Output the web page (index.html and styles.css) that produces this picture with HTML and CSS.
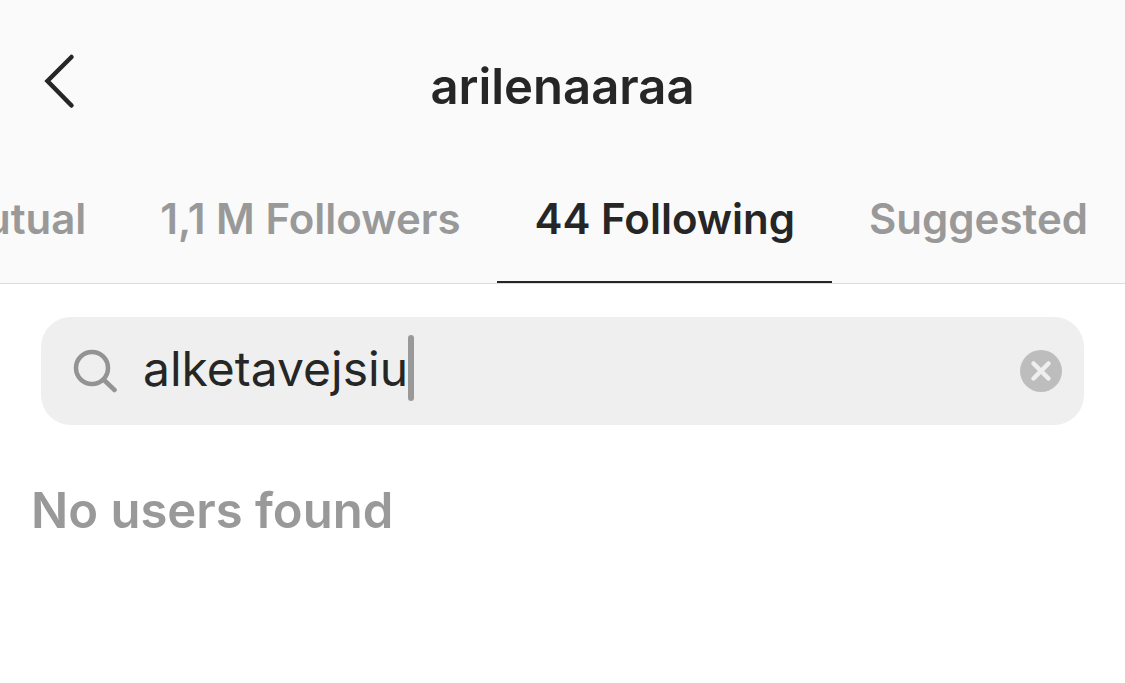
FILE: index.html
```html
<!DOCTYPE html>
<html lang="en">
<head>
    <meta charset="UTF-8">
    <meta name="viewport" content="width=device-width, initial-scale=1">
    <title>arilenaaraa</title>
    <link rel="stylesheet" href="styles.css">
</head>
<body>
    <header class="header">
        <div class="title-bar">
            <button class="back" type="button" aria-label="Back">
                <svg width="36" height="60" viewBox="0 0 36 60" fill="none" stroke="#262626" stroke-width="4.5" stroke-linecap="round">
                    <path d="M31.5 6 7.5 30 31.5 54.5"/>
                </svg>
            </button>
            <h1>arilenaaraa</h1>
        </div>
        <nav class="tabs">
            <a class="tab" href="#mutual">Mutual</a>
            <a class="tab" href="#followers">1,1 M Followers</a>
            <a class="tab active" href="#following" aria-current="page">44 Following</a>
            <a class="tab" href="#suggested">Suggested</a>
        </nav>
    </header>

    <main>
        <form class="search" role="search">
            <svg class="search-icon" width="44" height="44" viewBox="0 0 44 44" fill="none" stroke="#939393" stroke-width="4.5" stroke-linecap="round">
                <circle cx="19" cy="19" r="16"/>
                <path d="M30.5 30.5 41.5 41"/>
            </svg>
            <input class="search-input" type="text" value="alketavejsiu" aria-label="Search" autocomplete="off" spellcheck="false">
            <span class="caret"></span>
            <button class="clear" type="reset" aria-label="Clear search">
                <svg width="42" height="42" viewBox="0 0 42 42">
                    <circle cx="21" cy="21" r="21" fill="#bdbdbd"/>
                    <path d="m13.5 13.5 15 15M28.5 13.5l-15 15" stroke="#efefef" stroke-width="4.5" stroke-linecap="round"/>
                </svg>
            </button>
        </form>
        <p class="empty">No users found</p>
    </main>
</body>
</html>
```

FILE: styles.css
```css
* {
    box-sizing: border-box;
}

body {
    margin: 0;
    background-color: #fff;
    color: #262626;
    font-family: Inter, "Liberation Sans", sans-serif;
}

button {
    display: flex;
    padding: 0;
    border: none;
    background: none;
    cursor: pointer;
}

.header {
    background-color: #fafafa;
    border-bottom: 1px solid #dbdbdb;
}

.title-bar {
    display: grid;
    grid-template-columns: 36px 1fr 36px;
    align-items: center;
    height: 156px;
    padding: 18px 40px 0;
}

.back {
    margin-bottom: 12px;
}

h1 {
    margin: 0;
    font-size: 49px;
    font-weight: 600;
    line-height: 60px;
    text-align: center;
}

/* the strip is scrolled to its right end */
.tabs {
    display: flex;
    justify-content: flex-end;
    overflow: hidden;
}

.tab {
    flex: none;
    padding: 0 37px;
    border-bottom: 2px solid transparent;
    color: #999;
    font-size: 42px;
    font-weight: 600;
    line-height: 125px;
    text-decoration: none;
    white-space: nowrap;
}

.tab.active {
    color: #262626;
    border-bottom-color: #262626;
}

.search {
    display: flex;
    align-items: center;
    height: 108px;
    margin: 33px 41px 0;
    padding: 0 22px 0 32px;
    background-color: #efefef;
    border-radius: 30px;
}

.search-icon {
    flex: none;
    margin-right: 26px;
}

.search-input,
.caret {
    height: 66px;
    margin-bottom: 6px;
}

.search-input {
    field-sizing: content;
    min-width: 1px;
    padding: 0;
    border: none;
    outline: none;
    background: none;
    color: #262626;
    font-family: inherit;
    font-size: 48px;
}

.caret {
    flex: none;
    width: 6px;
    border-radius: 3px;
    background-color: #999;
}

.clear {
    flex: none;
    margin-left: auto;
}

.empty {
    margin: 56px 31px 0;
    color: #999;
    font-size: 49px;
    font-weight: 600;
    line-height: 60px;
}
```
